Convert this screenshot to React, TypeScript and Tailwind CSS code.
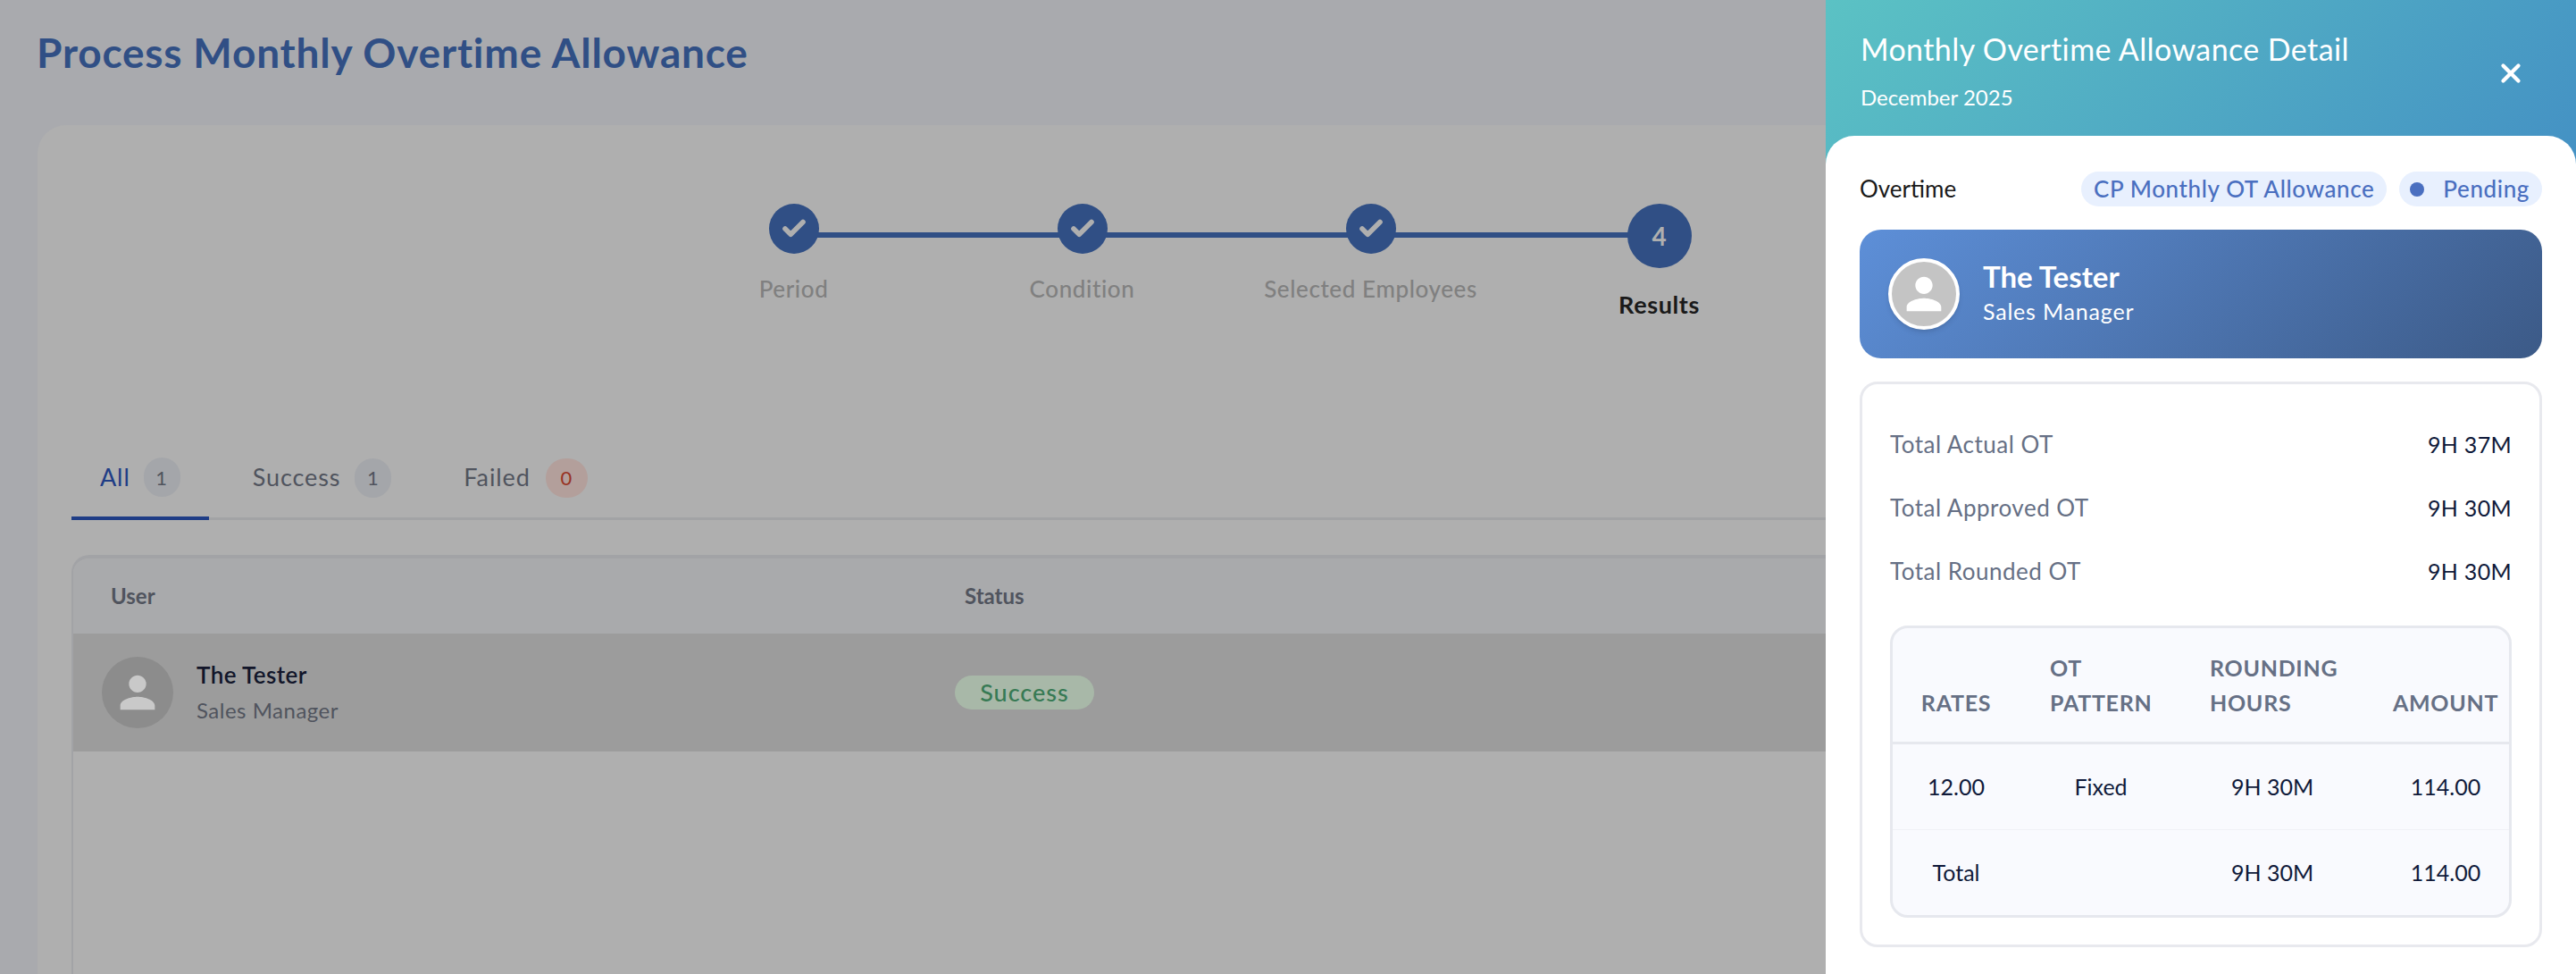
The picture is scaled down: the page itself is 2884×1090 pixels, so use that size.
import React from 'react';
import { Check, X } from 'lucide-react';

const PERSON = 'M12 12c2.21 0 4-1.79 4-4s-1.79-4-4-4-4 1.79-4 4 1.79 4 4 4zm0 2c-2.67 0-8 1.34-8 4v2h16v-2c0-2.66-5.33-4-8-4z';

const Person: React.FC<{ size: number; color: string }> = ({ size, color }) => (
  <svg width={size} height={size} viewBox="0 0 24 24" fill={color}>
    <path d={PERSON} />
  </svg>
);

const steps = ['Period', 'Condition', 'Selected Employees'];

const Stepper = () => (
  <div className="flex items-start ml-[647px]">
    {steps.map((label) => (
      <div key={label} className="relative w-[323px] flex flex-col items-center">
        <div className="absolute left-1/2 top-[32px] w-full h-[6px] bg-[#304f85]" />
        <div className="relative w-[56px] h-[56px] rounded-full bg-[#304f85] flex items-center justify-center">
          <Check size={30} strokeWidth={4.5} color="#afafaf" />
        </div>
        <div className="mt-[24px] text-[26px] leading-[30px] tracking-[0.6px] text-[#808080] font-medium">{label}</div>
      </div>
    ))}
    <div className="relative w-[323px] flex flex-col items-center">
      <div className="relative w-[72px] h-[72px] rounded-full bg-[#304f85] flex items-center justify-center text-[28px] font-bold text-[#afafaf]">
        4
      </div>
      <div className="mt-[26px] text-[27px] leading-[30px] tracking-[0.6px] text-[#1a1a1a] font-bold">Results</div>
    </div>
  </div>
);

const Tabs = () => (
  <div className="mt-[134px] flex gap-[17px] h-[92px] border-b-[3px] border-[#a2a3a5] text-[27px] tracking-[0.9px]">
    <div className="flex items-center gap-[15px] px-[32px] border-b-[4px] border-[#1f3d86] h-[92px] text-[#1f3d86]">
      All
      <span className="w-[41px] h-[44px] rounded-full bg-[#a4a6aa] flex items-center justify-center text-[22px] text-[#50545e]">1</span>
    </div>
    <div className="flex items-center gap-[16px] px-[32px] text-[#50545e]">
      Success
      <span className="w-[41px] h-[44px] rounded-full bg-[#a4a6aa] flex items-center justify-center text-[22px]">1</span>
    </div>
    <div className="flex items-center gap-[17px] px-[32px] text-[#50545e]">
      Failed
      <span className="w-[47px] h-[44px] rounded-full bg-[#b39f9b] flex items-center justify-center text-[22px] text-[#983324]">0</span>
    </div>
  </div>
);

const ResultsTable = () => (
  <div className="mt-[39px] h-[700px] rounded-tl-[20px] border-l-[2px] border-t-[4px] border-[#a2a3a6] overflow-hidden">
    <div className="flex items-center h-[84px] bg-[#a9aaac] text-[24px] font-bold text-[#50545e]">
      <div className="w-[988px] pl-[42px]">User</div>
      <div className="pl-[10px]">Status</div>
    </div>
    <div className="flex items-center h-[132px] bg-[#9c9c9c]">
      <div className="w-[988px] flex items-center pl-[32px] gap-[26px]">
        <div className="w-[80px] h-[80px] rounded-full bg-[#8c8c8c] flex items-center justify-center">
          <Person size={58} color="#c9c9c9" />
        </div>
        <div className="flex flex-col gap-[14px]">
          <div className="text-[26px] leading-[26px] tracking-[0.4px] font-semibold text-[#12162a]">The Tester</div>
          <div className="text-[24px] leading-[26px] tracking-[0.5px] text-[#50545e]">Sales Manager</div>
        </div>
      </div>
      <div className="w-[156px] -ml-[1px] h-[38px] rounded-full bg-[#a8b8a8] flex items-center justify-center text-[27px] tracking-[1px] font-medium text-[#377a54]">
        Success
      </div>
    </div>
  </div>
);

const StatRow: React.FC<{ label: string; value: string }> = ({ label, value }) => (
  <div className="flex justify-between items-center h-[71px]">
    <span className="text-[#667085] tracking-[0.5px]">{label}</span>
    <span className="text-[25px] text-[#101a3a] tracking-[0.3px]">{value}</span>
  </div>
);

const DetailTable = () => (
  <div className="mt-[25px] rounded-[20px] border-[3px] border-[#e6e8ee] bg-[#f9fafe] overflow-hidden text-[25px] text-[#101a3a]">
    <div className="flex h-[130px] items-end pb-[24px] border-b-[3px] border-[#e6e8ee] text-[#667085] font-bold tracking-[0.7px] leading-[39px]">
      <div className="w-[142px] shrink-0 text-center">RATES</div>
      <div className="w-[182px] shrink-0 pl-[34px]">OT<br />PATTERN</div>
      <div className="w-[202px] shrink-0 pl-[31px]">ROUNDING<br />HOURS</div>
      <div className="w-[186px] shrink-0 text-center">AMOUNT</div>
    </div>
    <div className="flex items-center h-[96px] border-b-[1px] border-[#f0f1f6]">
      <div className="w-[142px] shrink-0 text-center">12.00</div>
      <div className="w-[182px] shrink-0 text-center">Fixed</div>
      <div className="w-[202px] shrink-0 text-center">9H 30M</div>
      <div className="w-[186px] shrink-0 text-center">114.00</div>
    </div>
    <div className="flex items-center h-[95px]">
      <div className="w-[142px] shrink-0 text-center">Total</div>
      <div className="w-[182px] shrink-0" />
      <div className="w-[202px] shrink-0 text-center">9H 30M</div>
      <div className="w-[186px] shrink-0 text-center">114.00</div>
    </div>
  </div>
);

const DetailPanel = () => (
  <aside className="absolute top-0 right-0 bottom-0 w-[840px] bg-white flex flex-col">
    <div className="h-[184px] shrink-0 bg-[linear-gradient(135deg,#5bc2c4,#4491c4)] flex items-start justify-between pt-[34px] pl-[39px] pr-[56px] text-white">
      <div>
        <div className="text-[34px] leading-[42px] tracking-[0.4px]">Monthly Overtime Allowance Detail</div>
        <div className="text-[24px] leading-[30px] mt-[18px]">December 2025</div>
      </div>
      <X size={34} strokeWidth={3} className="mt-[31px]" />
    </div>
    <div className="flex-1 -mt-[32px] bg-white rounded-t-[32px] px-[38px] pt-[40px]">
      <div className="flex items-center justify-between h-[39px]">
        <span className="text-[26px] text-[#1a1a1a]">Overtime</span>
        <div className="flex gap-[14px] text-[26px] tracking-[0.6px] font-medium text-[#4a6fc0]">
          <span className="h-[39px] px-[14px] rounded-full bg-[#e8f0fe] flex items-center">CP Monthly OT Allowance</span>
          <span className="h-[39px] pl-[12px] pr-[14px] rounded-full bg-[#e8f0fe] flex items-center gap-[21px]">
            <span className="w-[16px] h-[16px] rounded-full bg-[#4a6fc0]" />
            Pending
          </span>
        </div>
      </div>
      <div className="mt-[26px] h-[144px] rounded-[24px] bg-[linear-gradient(135deg,#5d8fd8,#3c5a87)] flex items-center pl-[32px] gap-[26px]">
        <div className="w-[80px] h-[80px] rounded-full border-[4px] border-white bg-[#c4c4c4] shadow-md flex items-center justify-center">
          <Person size={58} color="#ffffff" />
        </div>
        <div className="text-white">
          <div className="text-[33px] leading-[38px] -mt-[5px] font-bold">The Tester</div>
          <div className="text-[25px] leading-[32px] mt-[4px] tracking-[0.8px]">Sales Manager</div>
        </div>
      </div>
      <div className="mt-[26px] h-[633px] rounded-[20px] border-[3px] border-[#e8e9ee] px-[31px] pt-[32px] text-[26px]">
        <StatRow label="Total Actual OT" value="9H 37M" />
        <StatRow label="Total Approved OT" value="9H 30M" />
        <StatRow label="Total Rounded OT" value="9H 30M" />
        <DetailTable />
      </div>
    </div>
  </aside>
);

export default function App() {
  return (
    <div className="relative h-[1090px] overflow-hidden bg-[#a9aaae] font-['Lato',sans-serif]">
      <div className="px-[42px]">
        <h1 className="pt-[32px] h-[140px] -ml-[1px] text-[46px] leading-[54px] tracking-[0.8px] font-bold text-[#304f85]">
          Process Monthly Overtime Allowance
        </h1>
        <div className="w-[2800px] h-[950px] rounded-t-[32px] bg-[#afafaf] pt-[88px] pl-[38px]">
          <Stepper />
          <Tabs />
          <ResultsTable />
        </div>
      </div>
      <DetailPanel />
    </div>
  );
}
